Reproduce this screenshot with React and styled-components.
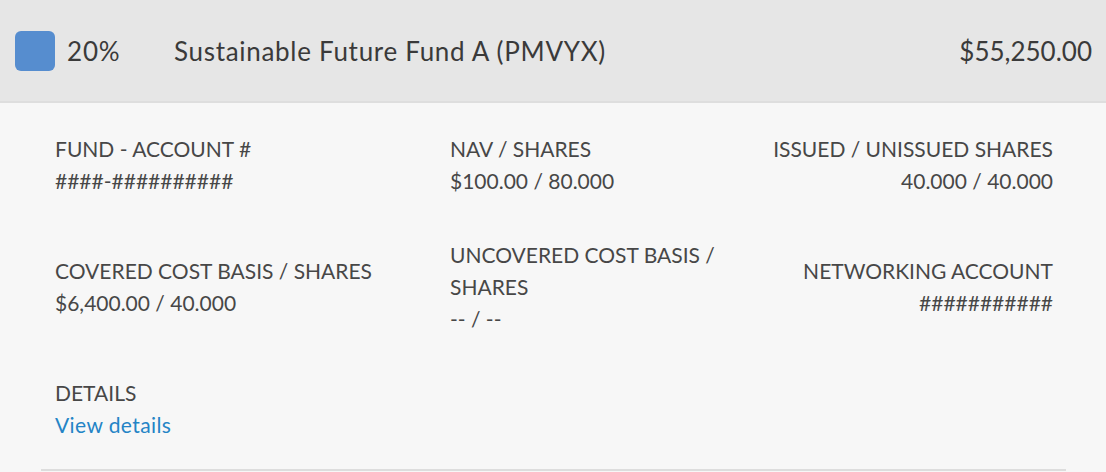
import React from 'react';
import styled, { createGlobalStyle } from 'styled-components';

const GlobalStyle = createGlobalStyle`
body {
  margin: 0;
  background: #f7f7f7;
  font-family: Lato, "Open Sans", sans-serif;
}
`;

const Panel = styled.div`
width: 1106px;
height: 472px;
background: #f7f7f7;
overflow: hidden;
`;

const Header = styled.div`
display: flex;
align-items: center;
height: 101px;
padding: 0 14px 0 15px;
background: #e6e6e6;
border-bottom: 2px solid #dedede;
color: #3a3a3a;
font-size: 26px;
`;

const Swatch = styled.div`
width: 40px;
height: 40px;
border-radius: 6px;
background: ${props => props.color};
margin-right: 12px;
`;

const Percent = styled.span`
width: 107px;
letter-spacing: 0.8px;
`;

const FundName = styled.span`
flex: 1;
letter-spacing: 0.7px;
`;

const Amount = styled.span``;

const Body = styled.div`
margin: 0 40px 0 41px;
padding: 30px 13px 28px 14px;
border-bottom: 2px solid #dddddd;
display: grid;
grid-template-columns: 395px 300px 1fr;
row-gap: 42px;
align-items: center;
font-size: 21px;
line-height: 32px;
color: #474747;
`;

const Field = styled.div`
text-align: ${props => (props.right ? 'right' : 'left')};
`;

const Label = styled.div`
text-transform: uppercase;
`;

const Value = styled.div``;

const Link = styled.a`
color: #2484c6;
text-decoration: none;
cursor: pointer;
letter-spacing: 0.4px;
`;

const fields = [
  { label: 'Fund - Account #', value: '####-##########' },
  { label: 'NAV / Shares', value: '$100.00 / 80.000' },
  { label: 'Issued / Unissued Shares', value: '40.000 / 40.000', right: true },
  { label: 'Covered Cost Basis / Shares', value: '$6,400.00 / 40.000' },
  { label: 'Uncovered Cost Basis / Shares', value: '-- / --' },
  { label: 'Networking Account', value: '###########', right: true },
];

export default function App() {
  return (
    <Panel>
      <GlobalStyle />
      <Header>
        <Swatch color="#568dcf" />
        <Percent>20%</Percent>
        <FundName>Sustainable Future Fund A (PMVYX)</FundName>
        <Amount>$55,250.00</Amount>
      </Header>
      <Body>
        {fields.map((f, i) => (
          <Field key={i} right={f.right}>
            <Label>{f.label}</Label>
            <Value>{f.value}</Value>
          </Field>
        ))}
        <Field>
          <Label>Details</Label>
          <Link>View details</Link>
        </Field>
      </Body>
    </Panel>
  );
}
